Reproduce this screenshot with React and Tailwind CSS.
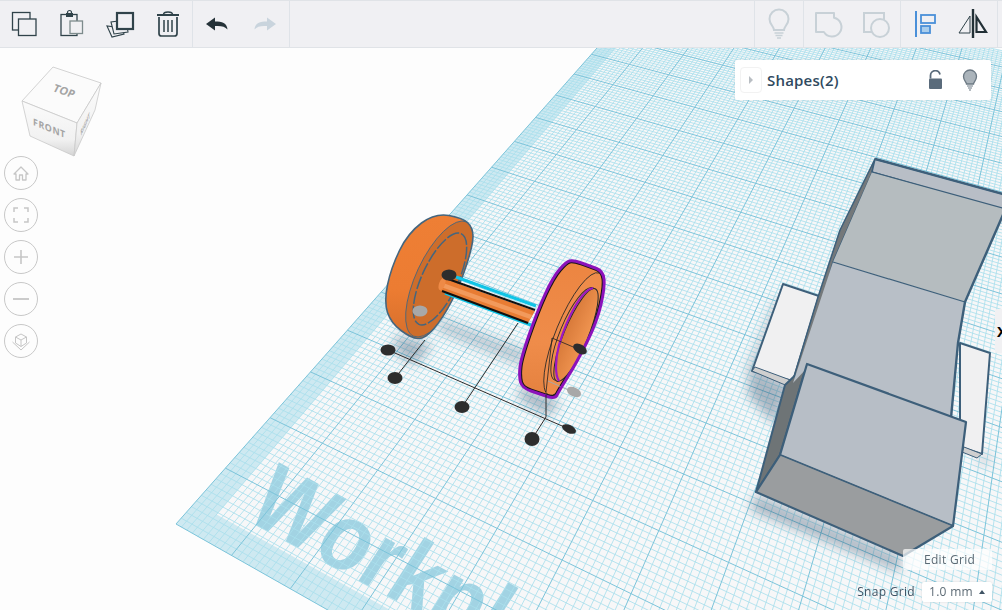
// App.jsx
import React from 'react';

// ground plane: perspective grid built from the two vanishing points
const O = [176, 524];
const VA = [-1750, -567];
const VB = [1141, -567];
const ALPHA = 0.028;
const BETA = 0.054;
const UMAX = 26;
const VMAX = 18.8;

const pt = (u, v) => {
  const a = u * ALPHA;
  const b = v * BETA;
  const w = 1 - a + b;
  return [
    (O[0] - a * VA[0] + b * VB[0]) / w,
    (O[1] - a * VA[1] + b * VB[1]) / w,
  ];
};

const quad = (u0, v0, u1, v1) =>
  [pt(u0, v0), pt(u1, v0), pt(u1, v1), pt(u0, v1)]
    .map((p) => `${p[0].toFixed(1)},${p[1].toFixed(1)}`)
    .join(' ');

const gridPath = (major) => {
  let d = '';
  const step = 0.1;
  const add = (a, b) => {
    d += `M${a[0].toFixed(1)} ${a[1].toFixed(1)}L${b[0].toFixed(1)} ${b[1].toFixed(1)}`;
  };
  for (let i = 0; i <= UMAX * 10; i++) {
    if ((i % 10 === 0) === major) add(pt(i * step, 0), pt(i * step, VMAX));
  }
  for (let i = 0; i <= VMAX * 10; i++) {
    if ((i % 10 === 0) === major) add(pt(0, i * step), pt(UMAX, i * step));
  }
  return d;
};

// closed outline rounded through the midpoints of a point list
const smooth = (pts) => {
  const mid = (a, b) => [(a[0] + b[0]) / 2, (a[1] + b[1]) / 2];
  const start = mid(pts[pts.length - 1], pts[0]);
  let d = `M${start[0]} ${start[1]}`;
  pts.forEach((p, i) => {
    const m = mid(p, pts[(i + 1) % pts.length]);
    d += `Q${p[0]} ${p[1]} ${m[0]} ${m[1]}`;
  });
  return d + 'Z';
};

const Workplane = () => {
  const bandU = 0.4;
  const bandV = 0.37;
  return (
    <g>
      <polygon points={quad(0, 0, UMAX, VMAX)} fill="#f7f7f8" />
      <polygon points={quad(0, 0, bandU, VMAX)} fill="#a5dcea" opacity="0.5" />
      <polygon points={quad(bandU, 0, UMAX, bandV)} fill="#a5dcea" opacity="0.5" />
      <text
        transform="matrix(0.72 0.39 -0.52 0.81 243 518)"
        fontFamily="'Liberation Sans', sans-serif"
        fontWeight="700"
        fontSize="100"
        fill="#86c8dd"
        opacity="0.75"
      >
        Workplane
      </text>
      <path d={gridPath(false)} stroke="#aadfec" strokeWidth="1" fill="none" opacity="0.85" />
      <path d={gridPath(true)} stroke="#7cc4da" strokeWidth="1" fill="none" />
    </g>
  );
};

const Shadows = () => (
  <g filter="url(#soft)" fill="#31506c" opacity="0.38">
    <polygon points="396,335 432,345 415,365 395,352" />
    <polygon points="440,318 530,352 522,366 436,330" opacity="0.7" />
    <polygon points="520,385 560,402 548,416 520,400" />
    <polygon points="775,300 800,300 790,375 745,372" opacity="0.6" />
    <polygon points="750,368 792,385 775,425 748,395" />
    <polygon points="756,494 902,557 900,572 750,510" />
    <polygon points="978,456 990,450 990,466 978,466" opacity="0.5" />
  </g>
);

const LEFT_WHEEL = [
  [435, 213], [463, 218], [473, 228], [473, 245], [460, 285], [443, 318],
  [425, 339], [411, 338], [391, 323], [384, 302], [391, 268], [408, 233],
];

const RIGHT_WHEEL = [
  [573, 260], [590, 266], [603, 271], [605, 287], [597, 322], [577, 362],
  [559, 391], [555, 399], [540, 394], [522, 388], [519, 376], [521, 358],
  [537, 312], [553, 277], [566, 262],
];

const LeftWheel = () => (
  <g>
    <path d={smooth(LEFT_WHEEL)} fill="url(#sideLeft)" />
    <g clipPath="url(#clipLeft)">
      <ellipse cx="440" cy="279" rx="63" ry="24" transform="rotate(-65 440 279)" fill="#cd6d2b" stroke="#44667f" strokeWidth="0.8" />
    </g>
    <ellipse cx="440" cy="279" rx="50" ry="18" transform="rotate(-65 440 279)" fill="none" stroke="#44667f" strokeWidth="1.500" strokeDasharray="13 2" />
    <path d={smooth(LEFT_WHEEL)} fill="none" stroke="#44667f" strokeWidth="1.600" />
  </g>
);

const Axle = () => (
  <g>
    <line x1="456" y1="277" x2="536" y2="306" stroke="#10c4e6" strokeWidth="3" />
    <line x1="445" y1="293" x2="531" y2="325" stroke="#10c4e6" strokeWidth="3" />
    <polygon points="445,279 535,311 528,323 440,291" fill="#e87c33" />
    <polygon points="443,283 532,315 530,319 441,287" fill="#f29a5c" />
    <ellipse cx="442" cy="284" rx="3" ry="6.500" transform="rotate(20 442 284)" fill="#ee8a46" />
    <line x1="448" y1="279" x2="535" y2="310" stroke="#111" strokeWidth="2" />
    <line x1="442" y1="291" x2="528" y2="323" stroke="#111" strokeWidth="2" />
  </g>
);

const RightWheel = () => (
  <g>
    <path d={smooth(RIGHT_WHEEL)} fill="url(#sideRight)" />
    <g clipPath="url(#clipRight)">
      <ellipse cx="574" cy="334" rx="66" ry="18" transform="rotate(-67.500 574 334)" fill="#ee8c4a" stroke="#2a2a2a" strokeWidth="0.8" />
      <path d={smooth(RIGHT_WHEEL)} fill="none" stroke="#151515" strokeWidth="5" />
    </g>
    <ellipse cx="574" cy="334" rx="50" ry="14" transform="rotate(-67.500 574 334)" fill="none" stroke="#2a2a2a" strokeWidth="0.9" />
    <ellipse cx="576" cy="335" rx="50" ry="12" transform="rotate(-67.500 576 335)" fill="url(#holeRight)" stroke="#2a2a2a" strokeWidth="1" />
    <path d="M593 288 C582 290 568 315 559 345 C555 360 555 375 559 381" fill="none" stroke="#9c18c4" strokeWidth="2.200" />
    <polyline points="552,338 578,349" fill="none" stroke="#222" strokeWidth="0.8" />
    <polyline points="552,338 546,392" fill="none" stroke="#222" strokeWidth="0.8" />
    <line x1="548" y1="381" x2="573" y2="392" stroke="#a8a8a8" strokeWidth="1" />
    <path d={smooth(RIGHT_WHEEL)} fill="none" stroke="#8c12ba" strokeWidth="3" />
  </g>
);

// box lines and handles around the selection
const Handles = () => (
  <g>
    <g stroke="#2b2b2b" strokeWidth="1" fill="none">
      <line x1="388" y1="350" x2="569" y2="429" />
      <line x1="395" y1="378" x2="425" y2="340" />
      <line x1="462" y1="407" x2="518" y2="323" />
      <line x1="532" y1="439" x2="546" y2="417" />
      <line x1="546" y1="417" x2="546" y2="395" />
    </g>
    <g fill="#2d2d2d">
      <ellipse cx="449" cy="275" rx="7.500" ry="5.500" />
      <ellipse cx="388" cy="350" rx="7.500" ry="5.500" />
      <ellipse cx="395" cy="378" rx="7.500" ry="6" />
      <ellipse cx="462" cy="407" rx="7.500" ry="6" />
      <ellipse cx="532" cy="439" rx="7.500" ry="7" />
      <ellipse cx="569" cy="429" rx="7.500" ry="4" transform="rotate(25 569 429)" />
      <ellipse cx="580" cy="349" rx="7.500" ry="4.500" transform="rotate(30 580 349)" />
    </g>
    <ellipse cx="420" cy="311" rx="7.500" ry="5.500" fill="#a8a8a8" />
    <ellipse cx="574" cy="392" rx="7.500" ry="4.500" transform="rotate(25 574 392)" fill="#a8a8a8" />
  </g>
);

const Car = () => (
  <g strokeLinejoin="round">
    {/* wings */}
    <polygon points="783,284 819,296 793,381 752,371" fill="#f0f0f1" stroke="#3d5f7a" strokeWidth="2" />
    <polygon points="752,371 755,367 793,381 790,387" fill="#cfcfcf" stroke="#3d5f7a" strokeWidth="1" />
    <polygon points="960,343 990,353 982,454 960,447" fill="#f0f0f1" stroke="#3d5f7a" strokeWidth="2" />
    <polygon points="964,447 982,454 977,458 962,452" fill="#cfcfcf" stroke="#3d5f7a" strokeWidth="1" />

    {/* left flank */}
    <polygon points="875,159 840,230 818,297 793,380 785,400 756,492 780,455 807,364 833,262 872,173" fill="#74787a" stroke="#3d5f7a" strokeWidth="1.500" />
    <polygon points="785,385 807,364 780,455 756,492" fill="#6e7476" stroke="#3d5f7a" strokeWidth="2" />

    {/* top panels */}
    <polygon points="875,159 1010,196 1010,212 872,172" fill="#b8bec6" stroke="#3d5f7a" strokeWidth="1.500" />
    <polygon points="872,172 1010,210 1010,203 965,302 833,262" fill="#b5bcbf" />
    <line x1="872" y1="172" x2="1010" y2="210" stroke="#3d5f7a" strokeWidth="1.200" />
    <polygon points="833,262 965,302 958,343 951,418 807,368 793,383" fill="#b8bfc7" />
    <line x1="833" y1="262" x2="965" y2="302" stroke="#3d5f7a" strokeWidth="1.200" />
    <polyline points="875,159 1010,196" fill="none" stroke="#3d5f7a" strokeWidth="2.400" />
    <polyline points="1005,210 965,302 958,343 951,418" fill="none" stroke="#3d5f7a" strokeWidth="2.400" />

    {/* nose */}
    <polygon points="807,364 966,422 953,526 780,455" fill="#b7bec6" stroke="#3d5f7a" strokeWidth="2.200" />
    <polygon points="780,455 953,526 903,556 756,492" fill="#9a9d9f" />
    <line x1="780" y1="455" x2="953" y2="526" stroke="#3d5f7a" strokeWidth="1.200" />
    <polyline points="953,526 903,556 756,492 780,455" fill="none" stroke="#3d5f7a" strokeWidth="2.200" />
  </g>
);

const NavCube = () => (
  <svg className="absolute left-0 top-[12px]" width="110" height="105" viewBox="0 60 110 105">
    <defs>
      <linearGradient id="cubeFront" x1="0" y1="0" x2="0" y2="1">
        <stop offset="0" stopColor="#fbfbfb" />
        <stop offset="0.7" stopColor="#f1f1f1" />
        <stop offset="1" stopColor="#d5d5d5" />
      </linearGradient>
    </defs>
    <g stroke="#c9c9c9" strokeWidth="0.8" strokeLinejoin="round">
      <polygon points="53,67 101,83 77,123 22,101" fill="#fbfbfb" />
      <polygon points="22,101 77,123 74,156 30,136" fill="url(#cubeFront)" />
      <polygon points="77,123 101,83 95,110 74,156" fill="url(#cubeFront)" />
    </g>
    <g fontFamily="'Open Sans', sans-serif" fontWeight="700" fill="#a4a4a4">
      <text transform="matrix(0.95 0.33 -0.45 0.9 52 91)" fontSize="11">TOP</text>
      <text transform="matrix(0.93 0.38 0 1 33 125)" fontSize="9.500" letterSpacing="0.6">FRONT</text>
      <text transform="matrix(0.42 -0.9 0.1 1 81 136)" fontSize="7">RIGHT</text>
    </g>
  </svg>
);

const Icon = ({ children, size = 32 }) => (
  <svg width={size} height={size} viewBox="0 0 32 32" fill="none">
    {children}
  </svg>
);

const Cell = ({ children }) => (
  <div className="flex h-full w-12 items-center justify-center">{children}</div>
);

const Group = ({ children, className = '' }) => (
  <div className={`flex h-full items-center border-r border-[#dfe3e8] ${className}`}>{children}</div>
);

const Toolbar = () => (
  <div className="flex h-12 items-center border-y border-y-[#e0e3e7] bg-[#f0f0f3]">
    <Group>
      <Cell>
        <Icon>
          <rect x="4.500" y="4.500" width="17.500" height="17.500" stroke="#30434a" strokeWidth="1.300" />
          <rect x="10.500" y="11" width="17.500" height="16.500" fill="#f0f0f3" stroke="#30434a" strokeWidth="1.300" />
        </Icon>
      </Cell>
      <Cell>
        <Icon>
          <rect x="5" y="6.500" width="16" height="21" stroke="#30434a" strokeWidth="1.300" />
          <rect x="10" y="5" width="7" height="4" fill="#30434a" />
          <circle cx="13.500" cy="4.500" r="2" stroke="#30434a" strokeWidth="1.200" />
          <rect x="14" y="13" width="12.500" height="12.500" fill="#f0f0f3" stroke="#7d8b8c" strokeWidth="1.300" />
        </Icon>
      </Cell>
      <Cell>
        <Icon>
          <polygon points="3,18 8,29 20,26 18,20" stroke="#30434a" strokeWidth="1.100" />
          <polygon points="7,14 10,26 24,24 22,12" fill="#f0f0f3" stroke="#30434a" strokeWidth="1.100" />
          <rect x="13" y="5" width="16" height="16" fill="#f0f0f3" stroke="#30434a" strokeWidth="2.200" />
        </Icon>
      </Cell>
      <Cell>
        <Icon>
          <path d="M5 7h22" stroke="#30434a" strokeWidth="2" />
          <path d="M11.500 6.500C11.500 3 20.500 3 20.500 6.500" stroke="#30434a" strokeWidth="1.500" />
          <path d="M7 9v16.500q0 2.500 2.500 2.500h13q2.500 0 2.500-2.500V9" stroke="#30434a" strokeWidth="1.700" />
          <path d="M12 12v12M16 12v12M20 12v12" stroke="#30434a" strokeWidth="1.500" />
        </Icon>
      </Cell>
    </Group>
    <Group>
      <Cell>
        <Icon>
          <path d="M5 16l9-6.500v4C21 13.500 26 15 26.500 21.500 24 18.500 20 17.500 14 18v4.500z" fill="#253238" />
        </Icon>
      </Cell>
      <Cell>
        <Icon>
          <path d="M27 16l-9-6.500v4C11 13.500 6 15 5.500 21.500 8 18.500 12 17.500 18 18v4.500z" fill="#c9d4dd" />
        </Icon>
      </Cell>
    </Group>
    <div className="flex-1" />
    <Group className="border-l">
      <Cell>
        <Icon>
          <path d="M11 22C11 18.500 6.500 16.500 6.500 11a9.500 9.500 0 0 1 19 0c0 5.500-4.500 7.500-4.500 11z" stroke="#c8d1d7" strokeWidth="2" />
          <path d="M11.500 25h9M12.500 27.500h7M14 30h4" stroke="#c8d1d7" strokeWidth="1.500" />
        </Icon>
      </Cell>
    </Group>
    <Group>
      <Cell>
        <Icon>
          <path d="M4 5H22V9.700A9.500 9.500 0 1 1 11.900 24H4Z" stroke="#c8d1d7" strokeWidth="2" strokeLinejoin="round" />
        </Icon>
      </Cell>
      <Cell>
        <Icon>
          <rect x="4" y="5" width="20" height="19" stroke="#c8d1d7" strokeWidth="2" />
          <circle cx="20" cy="20" r="9" fill="#f0f0f3" stroke="#c8d1d7" strokeWidth="2" />
        </Icon>
      </Cell>
    </Group>
    <Group>
      <Cell>
        <Icon>
          <path d="M7 3v26" stroke="#4a90d9" strokeWidth="2" />
          <rect x="12" y="7" width="14" height="8" stroke="#4a90d9" strokeWidth="1.800" />
          <rect x="12" y="18" width="9" height="7" fill="#a9cdec" stroke="#4a90d9" strokeWidth="1.800" />
        </Icon>
      </Cell>
      <Cell>
        <Icon>
          <path d="M16 1v29" stroke="#223036" strokeWidth="2.400" />
          <polygon points="13,8 13,25 2,25" stroke="#30434a" strokeWidth="1" />
          <polygon points="19.500,9 19.500,24 29,24" stroke="#223036" strokeWidth="2.200" />
        </Icon>
      </Cell>
    </Group>
    <div className="h-full w-1" />
  </div>
);

const ViewButton = ({ children }) => (
  <div className="flex h-[34px] w-[34px] items-center justify-center rounded-full border border-[#c8c8c8] bg-[#fdfdfd]">
    <svg width="24" height="24" viewBox="0 0 24 24" fill="none" stroke="#c6c6c6">
      {children}
    </svg>
  </div>
);

const ViewControls = () => (
  <div className="absolute left-1 top-[108px] flex flex-col gap-2">
    <ViewButton>
      <path d="M5 13l7-7 7 7-2 0v6h-3.500v-5h-3v5H7v-6z" strokeWidth="1.300" strokeLinejoin="round" />
    </ViewButton>
    <ViewButton>
      <path d="M5 9V5h4M15 5h4v4M19 15v4h-4M9 19H5v-4" strokeWidth="1.500" />
    </ViewButton>
    <ViewButton>
      <path d="M12 5v14M5 12h14" strokeWidth="1.600" />
    </ViewButton>
    <ViewButton>
      <path d="M4 12h16" strokeWidth="1.800" />
    </ViewButton>
    <ViewButton>
      <path d="M12 5l5.500 3v6L12 17.500 6.500 14V8zM6.500 8L12 11l5.500-3M12 11v6.500M3.500 13L12 21l8.500-8" strokeWidth="1" strokeLinejoin="round" />
    </ViewButton>
  </div>
);

const ShapesPanel = () => (
  <div className="absolute left-[735px] top-[12px] flex h-[40px] w-[256px] items-center rounded-[2px] bg-white pl-[5px] shadow-[0_0_3px_rgba(0,0,0,0.08)]">
    <div className="flex h-[26px] w-[22px] items-center justify-center rounded border border-[#f2f2f2]">
      <div className="h-0 w-0 border-y-[4px] border-l-[4px] border-y-transparent border-l-[#b9bec3]" />
    </div>
    <span className="ml-[5px] flex-1 text-[15px] font-semibold leading-none tracking-[0.2px] text-[#2f4a60]">
      Shapes(2)
    </span>
    <svg className="mr-[18px]" width="16" height="20" viewBox="0 0 16 20" fill="none">
      <rect x="1" y="8.500" width="13" height="10.500" rx="1" fill="#5a6b7b" />
      <path d="M2.500 8.500V5.500a4.800 4.800 0 0 1 9.500-1" stroke="#5a6b7b" strokeWidth="1.800" />
    </svg>
    <svg className="mr-[13px]" width="16" height="22" viewBox="0 0 16 22" fill="none">
      <path d="M4.500 15C4.500 13 1.500 11.500 1.500 7.500a6.500 6.500 0 0 1 13 0c0 4-3 5.500-3 7.500z" fill="#abb4bb" stroke="#6b7883" strokeWidth="1.300" />
      <path d="M5 17h6M6 19h4M7 21h2" stroke="#6b7883" strokeWidth="1.200" />
    </svg>
  </div>
);

const GridControls = () => (
  <div className="absolute right-[10px] top-[501px] flex flex-col items-end gap-3 whitespace-nowrap text-[12px] leading-none tracking-[0.3px] text-[#5c6a74]">
    <div className="flex h-[21px] w-[89px] items-center rounded-[2px] bg-white/70 pl-[21px]">Edit Grid</div>
    <div className="flex items-center gap-[7px]">
      <span className="text-[#3f5364]">Snap Grid</span>
      <div className="flex h-[20px] w-[70px] items-center gap-[6px] rounded-[2px] bg-white pl-[7px] shadow-[0_0_2px_rgba(0,0,0,0.15)]">
        <span>1.0 mm</span>
        <div className="h-0 w-0 border-x-[3px] border-b-[4px] border-x-transparent border-b-[#3f5364]" />
      </div>
    </div>
  </div>
);

const App = () => (
  <div className="flex h-[610px] w-[1002px] flex-col overflow-hidden bg-[#fdfdfd] font-['Open_Sans',sans-serif]">
    <Toolbar />
    <div className="relative flex-1 overflow-hidden">
      <svg className="block" width="1002" height="562" viewBox="0 48 1002 562">
        <defs>
          <filter id="soft" x="-30%" y="-30%" width="160%" height="160%">
            <feGaussianBlur stdDeviation="6" />
          </filter>
          <clipPath id="clipLeft">
            <path d={smooth(LEFT_WHEEL)} />
          </clipPath>
          <clipPath id="clipRight">
            <path d={smooth(RIGHT_WHEEL)} />
          </clipPath>
          <linearGradient id="sideLeft" x1="0" y1="0" x2="0" y2="1">
            <stop offset="0" stopColor="#ee7f35" />
            <stop offset="0.6" stopColor="#ec7c32" />
            <stop offset="1" stopColor="#d66f2c" />
          </linearGradient>
          <linearGradient id="sideRight" x1="0" y1="0" x2="0" y2="1">
            <stop offset="0" stopColor="#ec8541" />
            <stop offset="0.6" stopColor="#ef8c4a" />
            <stop offset="1" stopColor="#e4813f" />
          </linearGradient>
          <linearGradient id="holeRight" x1="0" y1="0" x2="0" y2="1">
            <stop offset="0" stopColor="#d87a3a" />
            <stop offset="1" stopColor="#f09450" />
          </linearGradient>
        </defs>
        <Workplane />
        <Shadows />
        <Car />
        <LeftWheel />
        <Axle />
        <RightWheel />
        <Handles />
      </svg>
      <NavCube />
      <ViewControls />
      <ShapesPanel />
      <GridControls />
      {/* ruler tab poking in from the right edge */}
      <div className="absolute right-0 top-[261px] flex h-[44px] w-[7px] items-center overflow-hidden rounded-l-[2px] bg-[#f1f1f3] pl-[2px] text-[15px] font-bold leading-none text-black">
        X
      </div>
    </div>
  </div>
);

export default App;
